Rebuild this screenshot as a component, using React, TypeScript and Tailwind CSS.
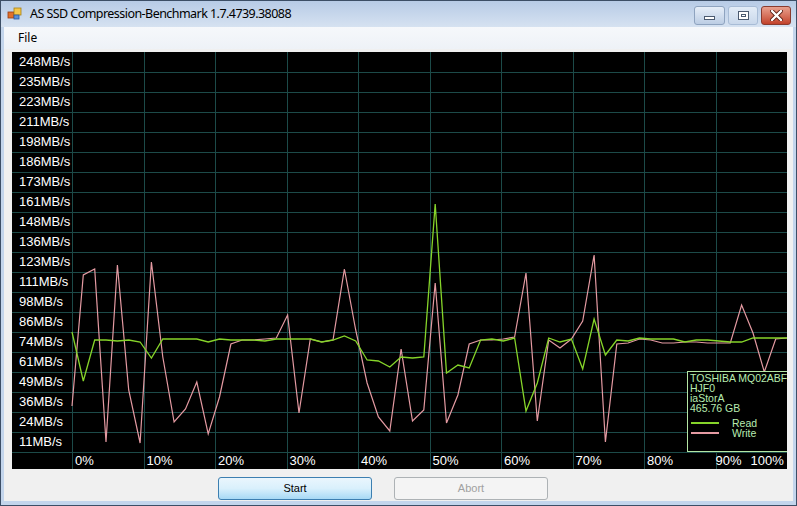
import React from 'react'

const yLabels = [
  '248MB/s', '235MB/s', '223MB/s', '211MB/s', '198MB/s', '186MB/s', '173MB/s',
  '161MB/s', '148MB/s', '136MB/s', '123MB/s', '111MB/s', '98MB/s', '86MB/s',
  '74MB/s', '61MB/s', '49MB/s', '36MB/s', '24MB/s', '11MB/s',
]

// screen-space y values of each sample (64 samples across the plot)
const writeY = [
  406, 275, 269, 442, 265, 390, 443, 262, 357, 422, 409, 382, 434, 397, 344, 340,
  340, 339, 338, 315, 413, 339, 342, 340, 269, 330, 383, 417, 431, 349, 421, 410,
  283, 423, 395, 344, 340, 340, 339, 337, 273, 421, 340, 348, 339, 321, 255, 442,
  344, 343, 339, 340, 343, 343, 342, 342, 343, 343, 343, 305, 333, 372, 339, 338,
]

const readY = [
  332, 381, 340, 340, 341, 340, 342, 358, 339, 339, 339, 339, 342, 339, 340, 340,
  340, 341, 339, 339, 339, 339, 342, 340, 336, 341, 360, 361, 367, 357, 358, 357,
  204, 373, 365, 368, 340, 339, 341, 338, 411, 383, 338, 342, 339, 369, 319, 355,
  340, 341, 338, 339, 339, 339, 342, 340, 340, 341, 342, 342, 338, 338, 338, 338,
]

// chart box sits at (12,52) on screen
const toPoints = (ys: number[]) =>
  ys.map((y, i) => `${(60 + (715 / 63) * i).toFixed(1)},${y - 52}`).join(' ')

function TitleBar() {
  return (
    <div className="h-[26px] flex items-center pl-[6px] pr-[5px] bg-gradient-to-b from-[#b7cbe6] to-[#d6e2f1]">
      {/* app icon */}
      <svg width="16" height="16" viewBox="0 0 16 16" className="mr-[7px]">
        <rect x="1" y="6" width="6" height="6" fill="#e0702a" stroke="#9a3a10" strokeWidth="0.8" />
        <rect x="7" y="2" width="7" height="7" fill="#f4c64a" stroke="#a88010" strokeWidth="0.8" />
        <rect x="7" y="9" width="5" height="4" fill="#5a8fd6" stroke="#2a5aa0" strokeWidth="0.8" />
      </svg>
      <span className="text-[12.5px] text-black font-['Noto_Sans',sans-serif] tracking-[-0.55px]">
        AS SSD Compression-Benchmark 1.7.4739.38088
      </span>
      <div className="ml-auto flex gap-[3px] self-start mt-[5px]">
        <div className="w-[31px] h-[19px] rounded-[3px] border border-[#8ea3bf] bg-gradient-to-b from-[#e6eef8] to-[#bccde4] flex items-center justify-center">
          <div className="w-[11px] h-[4px] bg-white border border-[#4b5a70] mt-[5px]" />
        </div>
        <div className="w-[30px] h-[19px] rounded-[3px] border border-[#a8bcd6] bg-gradient-to-b from-[#e3ecf7] to-[#c9d8eb] flex items-center justify-center">
          <div className="w-[11px] h-[9px] border border-[#4b5a70] bg-white flex items-center justify-center">
            <div className="w-[5px] h-[3px] border border-[#4b5a70]" />
          </div>
        </div>
        <div className="w-[30px] h-[19px] rounded-[3px] border border-[#8a3b2e] bg-gradient-to-b from-[#e8a08e] to-[#c2412a] flex items-center justify-center">
          <svg width="13" height="11" viewBox="0 0 13 11">
            <path d="M2 1 L11 10 M11 1 L2 10" stroke="#5a1e14" strokeWidth="4" strokeLinecap="round" />
            <path d="M2 1 L11 10 M11 1 L2 10" stroke="#ffffff" strokeWidth="2.4" strokeLinecap="round" />
          </svg>
        </div>
      </div>
    </div>
  )
}

function Chart() {
  return (
    <div className="relative ml-[8px] w-[775px] h-[417px] bg-black overflow-hidden">
      <svg className="absolute inset-0" width="775" height="417">
        {yLabels.map((_, i) => (
          <line key={`h${i}`} x1="0" x2="775" y1={20.5 + i * 20} y2={20.5 + i * 20} stroke="#1c4a48" />
        ))}
        {Array.from({ length: 10 }).map((_, i) => (
          <line
            key={`v${i}`}
            x1={Math.round(60 + 71.5 * i) + 0.5}
            x2={Math.round(60 + 71.5 * i) + 0.5}
            y1="0"
            y2="417"
            stroke="#1c4a48"
          />
        ))}
        <polyline points={toPoints(writeY)} fill="none" stroke="#e49aa2" strokeWidth="1.2" />
        <polyline points={toPoints(readY)} fill="none" stroke="#86d42a" strokeWidth="1.3" />
      </svg>

      <div className="relative flex flex-col w-[60px] font-['Liberation_Sans',Arial,sans-serif] text-[13px] text-white">
        {yLabels.map((l) => (
          <div key={l} className="h-[20px] leading-[20px] pl-[7px]">
            {l}
          </div>
        ))}
      </div>

      <div className="relative grid grid-cols-10 ml-[60px] w-[715px] h-[17px] font-['Liberation_Sans',Arial,sans-serif] text-[13px] text-white leading-[17px]">
        {['0%', '10%', '20%', '30%', '40%', '50%', '60%', '70%', '80%'].map((p) => (
          <div key={p} className="pl-[3px]">
            {p}
          </div>
        ))}
        <div className="flex gap-[9px]">
          <span>90%</span>
          <span>100%</span>
        </div>
      </div>

      {/* legend, clipped by the chart's right edge */}
      <div className="absolute left-[675px] top-[319px] w-[120px] h-[81px] border border-[#b4e6a4] bg-black px-[2px] pt-[1px] font-['Liberation_Sans',Arial,sans-serif] text-[10.5px] leading-[10px] text-[#b8ecb0] whitespace-nowrap">
        <div>TOSHIBA MQ02ABF</div>
        <div>HJF0</div>
        <div>iaStorA</div>
        <div>465.76 GB</div>
        <div className="flex items-center mt-[5px]">
          <div className="w-[28px] h-[1.5px] bg-[#86d42a] ml-[1px] mr-[13px]" />
          <span>Read</span>
        </div>
        <div className="flex items-center">
          <div className="w-[28px] h-[1.5px] bg-[#e49aa2] ml-[1px] mr-[13px]" />
          <span>Write</span>
        </div>
      </div>
    </div>
  )
}

export default function App() {
  return (
    <div className="w-[797px] h-[506px] bg-[#c3d5ec] border border-[#3c4e66] flex flex-col overflow-hidden">
      <TitleBar />
      <div className="flex-1 mx-[3px] mb-[4px] bg-[#f0f0f0] flex flex-col">
        <div className="h-[22px] bg-gradient-to-b from-[#f6f8fb] to-[#eef2f7] flex items-center pl-[14px] text-[12px] text-black font-['Noto_Sans',sans-serif]">
          File
        </div>
        <div className="mt-[3px]">
          <Chart />
        </div>
        <div className="flex mt-[8px] ml-[214px] gap-[22px] font-['Liberation_Sans',Arial,sans-serif] text-[11px]">
          <button className="w-[154px] h-[23px] rounded-[3px] border border-[#3c7fb1] bg-gradient-to-b from-[#eaf6fd] via-[#d9f0fc] to-[#a7d9f5] text-black">
            Start
          </button>
          <button className="w-[154px] h-[23px] rounded-[3px] border border-[#adb2b5] bg-[#f4f4f4] text-[#a0a0a0]">
            Abort
          </button>
        </div>
      </div>
    </div>
  )
}
